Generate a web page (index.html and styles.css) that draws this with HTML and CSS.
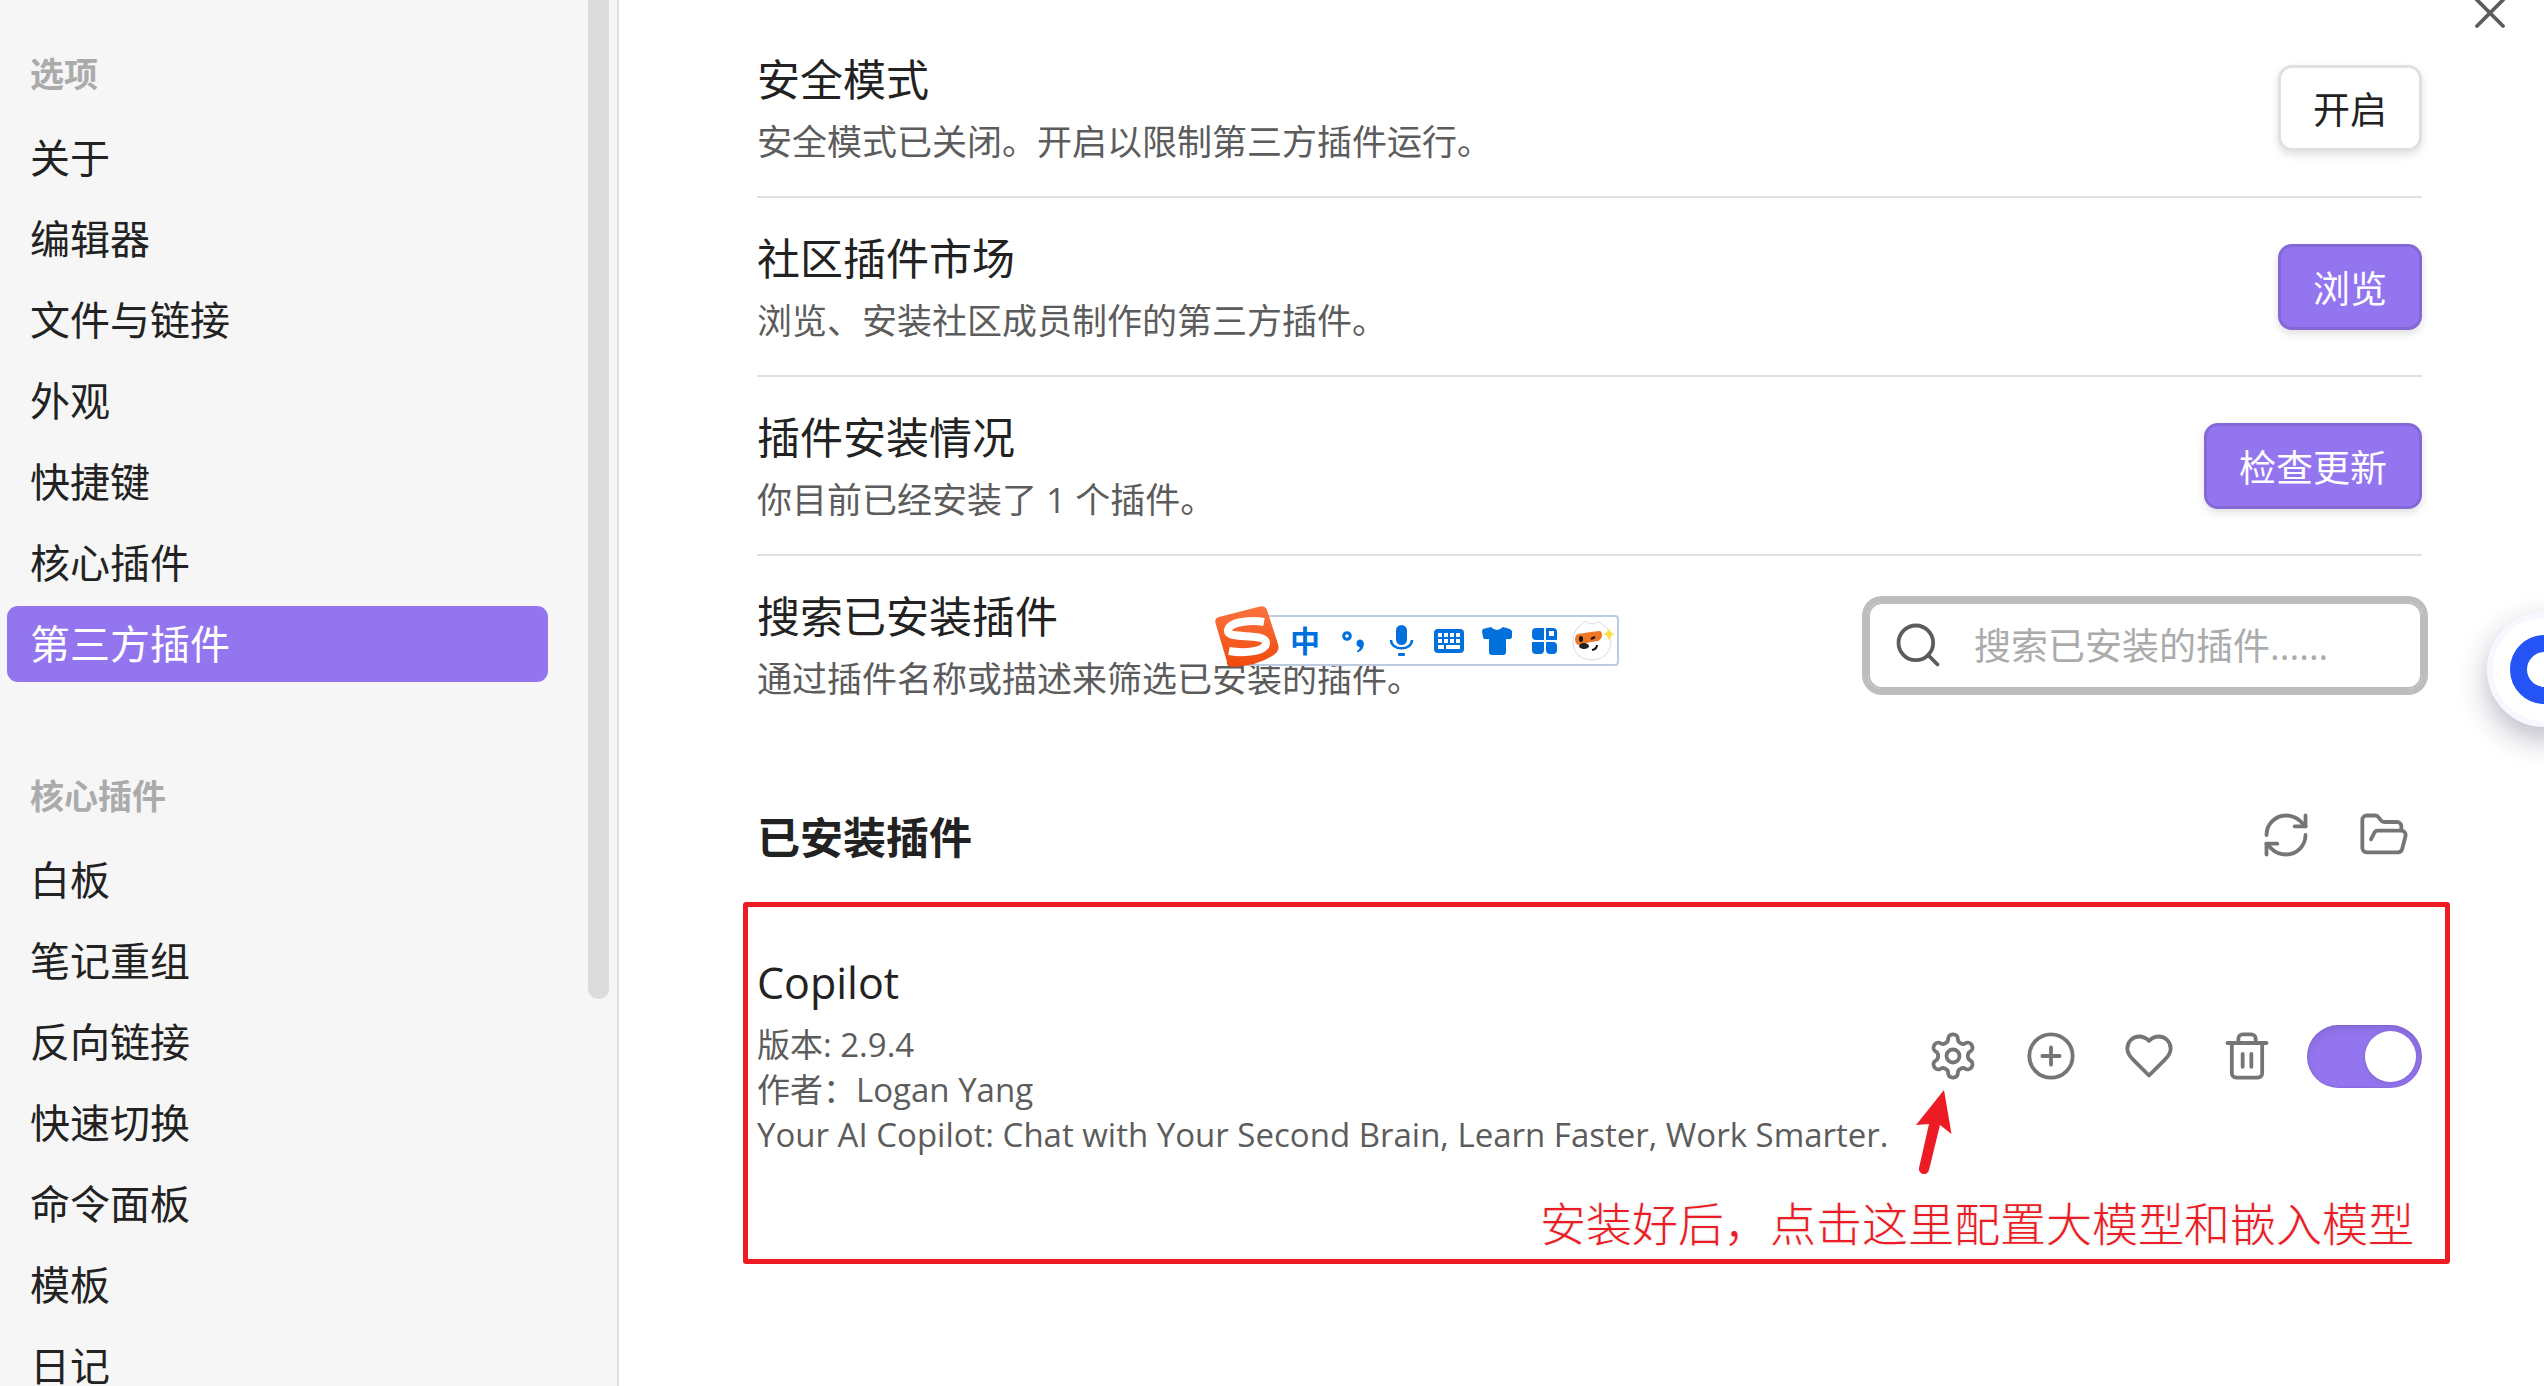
FILE: index.html
```html
<!DOCTYPE html>
<html lang="zh-CN">
<head>
    <meta charset="UTF-8">
    <meta name="viewport" content="width=device-width, initial-scale=1.0">
    <title>第三方插件</title>
    <link rel="stylesheet" href="styles.css">
</head>
<body>
    <div class="settings">
        <nav class="sidebar">
            <div class="nav-group">
                <h2 class="nav-title">选项</h2>
                <a class="nav-item" href="#about">关于</a>
                <a class="nav-item" href="#editor">编辑器</a>
                <a class="nav-item" href="#files">文件与链接</a>
                <a class="nav-item" href="#appearance">外观</a>
                <a class="nav-item" href="#hotkeys">快捷键</a>
                <a class="nav-item" href="#core">核心插件</a>
                <a class="nav-item active" href="#community">第三方插件</a>
            </div>
            <div class="nav-group">
                <h2 class="nav-title">核心插件</h2>
                <a class="nav-item" href="#canvas">白板</a>
                <a class="nav-item" href="#composer">笔记重组</a>
                <a class="nav-item" href="#backlinks">反向链接</a>
                <a class="nav-item" href="#switcher">快速切换</a>
                <a class="nav-item" href="#palette">命令面板</a>
                <a class="nav-item" href="#templates">模板</a>
                <a class="nav-item" href="#daily">日记</a>
            </div>
            <div class="scroll-thumb"></div>
        </nav>

        <main class="content">
            <section class="row">
                <div class="info">
                    <div class="name">安全模式</div>
                    <div class="desc">安全模式已关闭。开启以限制第三方插件运行。</div>
                </div>
                <button class="button">开启</button>
            </section>

            <section class="row">
                <div class="info">
                    <div class="name">社区插件市场</div>
                    <div class="desc">浏览、安装社区成员制作的第三方插件。</div>
                </div>
                <button class="button primary">浏览</button>
            </section>

            <section class="row">
                <div class="info">
                    <div class="name">插件安装情况</div>
                    <div class="desc">你目前已经安装了 1 个插件。</div>
                </div>
                <button class="button primary">检查更新</button>
            </section>

            <section class="row">
                <div class="info">
                    <label class="name" for="search">搜索已安装插件</label>
                    <div class="desc">通过插件名称或描述来筛选已安装的插件。</div>
                </div>
                <div class="search">
                    <svg class="icon" viewBox="0 0 24 24"><circle cx="11" cy="11" r="8"/><path d="m21 21-4.3-4.3"/></svg>
                    <input type="text" id="search" placeholder="搜索已安装的插件......">
                </div>
            </section>

            <div class="heading">
                <h1>已安装插件</h1>
                <div class="actions">
                    <button class="icon-button" aria-label="重新加载插件">
                        <svg class="icon" viewBox="0 0 24 24"><path d="M3 12a9 9 0 0 1 9-9 9.75 9.75 0 0 1 6.74 2.74L21 8"/><path d="M21 3v5h-5"/><path d="M21 12a9 9 0 0 1-9 9 9.75 9.75 0 0 1-6.74-2.74L3 16"/><path d="M8 16H3v5"/></svg>
                    </button>
                    <button class="icon-button" aria-label="打开插件文件夹">
                        <svg class="icon" viewBox="0 0 24 24"><path d="m6 14 1.45-2.9A2 2 0 0 1 9.24 10H20a2 2 0 0 1 1.94 2.5l-1.55 6a2 2 0 0 1-1.94 1.5H4a2 2 0 0 1-2-2V5c0-1.1.9-2 2-2h3.93a2 2 0 0 1 1.66.9l.82 1.2a2 2 0 0 0 1.66.9H18a2 2 0 0 1 2 2v2"/></svg>
                    </button>
                </div>
            </div>

            <section class="marked">
                <div class="plugin">
                    <div class="info">
                        <div class="name">Copilot</div>
                        <div class="desc">
                            <div>版本: 2.9.4</div>
                            <div>作者：Logan Yang</div>
                            <div>Your AI Copilot: Chat with Your Second Brain, Learn Faster, Work Smarter.</div>
                        </div>
                    </div>
                    <div class="actions">
                        <button class="icon-button" aria-label="选项">
                            <svg class="icon" viewBox="0 0 24 24"><path d="M12.22 2h-.44a2 2 0 0 0-2 2v.18a2 2 0 0 1-1 1.73l-.43.25a2 2 0 0 1-2 0l-.15-.08a2 2 0 0 0-2.73.73l-.22.38a2 2 0 0 0 .73 2.73l.15.1a2 2 0 0 1 1 1.72v.51a2 2 0 0 1-1 1.74l-.15.09a2 2 0 0 0-.73 2.73l.22.38a2 2 0 0 0 2.73.73l.15-.08a2 2 0 0 1 2 0l.43.25a2 2 0 0 1 1 1.73V20a2 2 0 0 0 2 2h.44a2 2 0 0 0 2-2v-.18a2 2 0 0 1 1-1.73l.43-.25a2 2 0 0 1 2 0l.15.08a2 2 0 0 0 2.73-.73l.22-.39a2 2 0 0 0-.73-2.73l-.15-.08a2 2 0 0 1-1-1.74v-.5a2 2 0 0 1 1-1.74l.15-.09a2 2 0 0 0 .73-2.73l-.22-.38a2 2 0 0 0-2.73-.73l-.15.08a2 2 0 0 1-2 0l-.43-.25a2 2 0 0 1-1-1.73V4a2 2 0 0 0-2-2z"/><circle cx="12" cy="12" r="3"/></svg>
                            <svg class="arrow" viewBox="0 0 36 86"><path d="M28 1 35.500 45 24 36 13 81a5 5 0 0 1-10-2L13 35 0 36z"/></svg>
                        </button>
                        <button class="icon-button" aria-label="快捷键">
                            <svg class="icon" viewBox="0 0 24 24"><circle cx="12" cy="12" r="10"/><path d="M8 12h8M12 8v8"/></svg>
                        </button>
                        <button class="icon-button" aria-label="捐赠">
                            <svg class="icon" viewBox="0 0 24 24"><path d="M19 14c1.49-1.46 3-3.21 3-5.5A5.5 5.5 0 0 0 16.500 3c-1.760 0-3 .5-4.500 2-1.500-1.500-2.740-2-4.500-2A5.500 5.500 0 0 0 2 8.500c0 2.300 1.500 4.050 3 5.500l7 7Z"/></svg>
                        </button>
                        <button class="icon-button" aria-label="卸载">
                            <svg class="icon" viewBox="0 0 24 24"><path d="M3 6h18M19 6v14a2 2 0 0 1-2 2H7a2 2 0 0 1-2-2V6M8 6V4a2 2 0 0 1 2-2h4a2 2 0 0 1 2 2v2M10 11v6M14 11v6"/></svg>
                        </button>
                        <input type="checkbox" class="toggle" aria-label="启用 Copilot" checked>
                    </div>
                </div>
                <p class="note">安装好后，点击这里配置大模型和嵌入模型</p>
            </section>
        </main>
    </div>

    <button class="close" aria-label="关闭">
        <svg class="icon" viewBox="0 0 24 24"><path d="M18 6 6 18M6 6l12 12"/></svg>
    </button>

    <!-- input method toolbar -->
    <div class="ime">
        <svg class="ime-logo" viewBox="0 0 64 62">
            <defs>
                <linearGradient id="flame" x1="0" y1="0" x2="0" y2="1">
                    <stop offset="0" stop-color="#fb7240"/>
                    <stop offset="1" stop-color="#f04a0c"/>
                </linearGradient>
            </defs>
            <path fill="url(#flame)" d="M4 11 45 .500q5-1.500 7 3.500L63 38q2 6-3 10Q44 60 18 61q-5 0-6-5L.500 17q-1-5 3.500-6z"/>
            <path fill="none" stroke="#fff" stroke-width="8" d="M49 16C38 14 13 15 13 25c0 9 38 1 38 12 0 8-20 11-37 8"/>
        </svg>
        <span class="ime-cell">中</span>
        <span class="ime-cell"><svg viewBox="0 0 32 32"><circle cx="10" cy="11" r="3.300" fill="none" stroke="#0070dc" stroke-width="3"/><path d="M22.500 14.500a4 4 0 0 1 4.300 4.500c0 4-2.500 7-6 8.500l-1-1.500c2-1 3-2.300 3-3.700a4 4 0 0 1-.3-7.800z"/></svg></span>
        <span class="ime-cell"><svg viewBox="0 0 32 32"><rect x="11" y="0" width="11" height="20" rx="5.500"/><path fill="none" stroke="#0070dc" stroke-width="2.500" d="M6 15c0 11 21 11 21 0"/><rect x="13" y="28" width="7" height="3" rx="1"/></svg></span>
        <span class="ime-cell"><svg viewBox="0 0 32 32"><rect x="1" y="4" width="30" height="24" rx="4"/><path fill="#fff" d="M5 8h4v4H5zM11 8h4v4h-4zM17 8h4v4h-4zM23 8h4v4h-4zM5 14h4v4H5zM11 14h4v4h-4zM17 14h4v4h-4zM23 14h4v4h-4zM5 20h6v4H5zM13 20h14v4H13z"/></svg></span>
        <span class="ime-cell"><svg viewBox="0 0 32 32"><path d="M10 2q6 6 12 0l7 2 2 2v6q0 2-2 2h-4v13q0 3-3 3H11q-3 0-3-3V14H4q-2 0-2-2L1 6l1-2z"/></svg></span>
        <span class="ime-cell"><svg viewBox="0 0 32 32"><path d="M7 3h8v12H7q-4 0-4-4V7q0-4 4-4zM17 3h7q4 0 4 4v8H17zM3 17h12v8q0 4-4 4H7q-4 0-4-4zM17 17h7q4 0 4 4v4q0 4-4 4h-3q-4 0-4-4z"/><path fill="#fff" d="M20 6h5v5h-5z"/></svg></span>
        <span class="ime-cell">
            <svg class="ime-face" viewBox="0 0 44 44">
                <path fill="#fff" stroke="#ddd8e8" d="M11 5q3-4 7-1 3 2 6 0 4-3 8 2 8 5 8 17c0 10-8 18-19 18S2 34 2 23Q2 10 11 5z"/>
                <path fill="#ee7726" d="M7 15q12-2 21-3 3 0 3 4t-4 6q-10 1-19 4-3 0-4-5 0-5 3-6z"/>
                <ellipse cx="10" cy="20" rx="2" ry="3"/>
                <ellipse cx="13" cy="27" rx="5" ry="3" fill="#222"/>
                <path fill="none" stroke="#111" stroke-width="2" d="m20 20 4-2M26 26q0 4-5 5"/>
                <path fill="#fbe04a" d="M38 9q1 5 6 6-5 1-6 7-1-6-6-7 5-1 6-6z"/>
            </svg>
        </span>
    </div>

    <button class="assistant" aria-label="助手"></button>
</body>
</html>
```

FILE: styles.css
```css
* {
    box-sizing: border-box;
}

body {
    margin: 0;
    height: 100vh;
    overflow: hidden;
    position: relative;
    background-color: #fff;
    color: #222;
    font-family: "Open Sans", "Noto Sans CJK SC", sans-serif;
    font-size: 37px;
}

button,
input {
    font: inherit;
    color: inherit;
}

.settings {
    display: grid;
    grid-template-columns: 619px 1fr;
    height: 100%;
}

/* sidebar */
.sidebar {
    position: relative;
    overflow: hidden;
    padding: 33px 69px 0 7px;
    background-color: #f6f6f6;
    border-right: 2px solid #e0e0e0;
}

.nav-group {
    display: flex;
    flex-direction: column;
    gap: 5px;
    margin-bottom: 73px;
}

.nav-title {
    margin: 0;
    padding-left: 23px;
    line-height: 82px;
    font-size: 34px;
    font-weight: bold;
    color: #ababab;
}

.nav-item {
    padding-left: 23px;
    line-height: 76px;
    border-radius: 11px;
    font-size: 40px;
    color: #222;
    text-decoration: none;
}

.nav-item.active {
    background-color: #9475f0;
    color: #fff;
}

.scroll-thumb {
    position: absolute;
    top: 0;
    right: 8px;
    width: 21px;
    height: 999px;
    border-radius: 0 0 10px 10px;
    background-color: #dcdcdc;
}

/* content */
.content {
    padding: 19px 122px 0 138px;
}

.row {
    display: flex;
    align-items: center;
    justify-content: space-between;
    padding: 33px 0 32px;
    border-bottom: 2px solid #e0e0e0;
}

.row:nth-of-type(4) {
    border-bottom: none;
}

.info {
    display: flex;
    flex-direction: column;
    gap: 11px;
}

.name {
    font-size: 43px;
    line-height: 56px;
}

.desc {
    font-size: 35px;
    line-height: 45px;
    color: #5c5c5c;
}

.button {
    height: 86px;
    padding: 0 32px;
    border: 3px solid #e0e0e0;
    border-radius: 14px;
    background-color: #fff;
    box-shadow: 0 4px 8px rgba(0, 0, 0, 0.12);
    cursor: pointer;
}

.button.primary {
    border-color: #8468d6;
    background-color: #9475f0;
    color: #fff;
}

.icon {
    display: block;
    width: 52px;
    height: 52px;
    fill: none;
    stroke: currentColor;
    stroke-width: 1.75;
    stroke-linecap: round;
    stroke-linejoin: round;
}

.search {
    display: flex;
    align-items: center;
    gap: 30px;
    width: 554px;
    height: 87px;
    padding-left: 22px;
    border: 2px solid #bdbdbd;
    border-radius: 14px;
    box-shadow: 0 0 0 6px #bdbdbd;
    color: #5c5c5c;
}

.search input {
    flex: 1;
    min-width: 0;
    padding: 0;
    border: none;
    outline: none;
    background: none;
}

.search input::placeholder {
    color: #ababab;
}

.heading {
    display: flex;
    align-items: center;
    justify-content: space-between;
    height: 80px;
    margin: 62px 0 27px;
}

.heading h1 {
    margin: 0;
    font-size: 43px;
}

.actions {
    display: flex;
    align-items: center;
    gap: 22px;
}

.icon-button {
    position: relative;
    padding: 12px;
    border: none;
    background: none;
    color: #757575;
    cursor: pointer;
}

.marked {
    margin: 0 -28px 0 -14px;
    padding: 48px 23px 6px 9px;
    border: 5px solid #ed1c24;
    border-radius: 3px;
}

.plugin {
    display: flex;
    align-items: center;
    justify-content: space-between;
}

.plugin .desc {
    font-size: 33px;
    white-space: nowrap;
}

.arrow {
    position: absolute;
    top: 71px;
    left: 1px;
    width: 36px;
    height: 86px;
    fill: #ed1c24;
}

.toggle {
    appearance: none;
    display: flex;
    align-items: center;
    justify-content: flex-end;
    width: 115px;
    height: 63px;
    margin: 0;
    padding: 6px;
    border-radius: 32px;
    background-color: #9475f0;
    box-shadow: inset 0 4px 10px rgba(0, 0, 0, 0.1), inset 0 0 2px rgba(0, 0, 0, 0.2);
}

.toggle::before {
    content: "";
    width: 51px;
    height: 51px;
    border-radius: 50%;
    background-color: #fff;
    box-shadow: 0 1px 4px rgba(0, 0, 0, 0.15);
}

.note {
    margin: 36px 8px 0 0;
    font-size: 46px;
    line-height: 60px;
    font-weight: 300;
    text-align: right;
    color: #ed1c24;
    text-shadow: 0 0 3px #ddd;
}

.close {
    position: absolute;
    top: -13px;
    right: 28px;
    padding: 0;
    border: none;
    background: none;
    color: #5c5c5c;
}

/* floating things over the page */
.ime {
    position: absolute;
    top: 615px;
    left: 1244px;
    display: flex;
    align-items: center;
    height: 51px;
    padding-left: 35px;
    border: 2px solid #bccbe0;
    border-radius: 4px;
    background-color: #fff;
}

.ime-logo {
    position: absolute;
    top: -11px;
    left: -31px;
    width: 64px;
    height: 62px;
}

.ime-cell {
    display: flex;
    justify-content: center;
    width: 48px;
    font-size: 30px;
    font-weight: bold;
    line-height: 44px;
    color: #0070dc;
}

.ime-cell svg {
    width: 32px;
    height: 32px;
    fill: #0070dc;
}

.ime-cell .ime-face {
    width: 44px;
    height: 44px;
    fill: #111;
}

.assistant {
    position: absolute;
    top: 612px;
    right: -58px;
    width: 115px;
    height: 115px;
    padding: 17px;
    border: 6px solid #f7f8ff;
    border-radius: 50%;
    background-color: #fff;
    box-shadow: 0 12px 30px rgba(30, 20, 60, 0.3);
}

.assistant::before {
    content: "";
    display: block;
    box-sizing: border-box;
    height: 69px;
    border: 17px solid #2453f6;
    border-radius: 50%;
}
```
